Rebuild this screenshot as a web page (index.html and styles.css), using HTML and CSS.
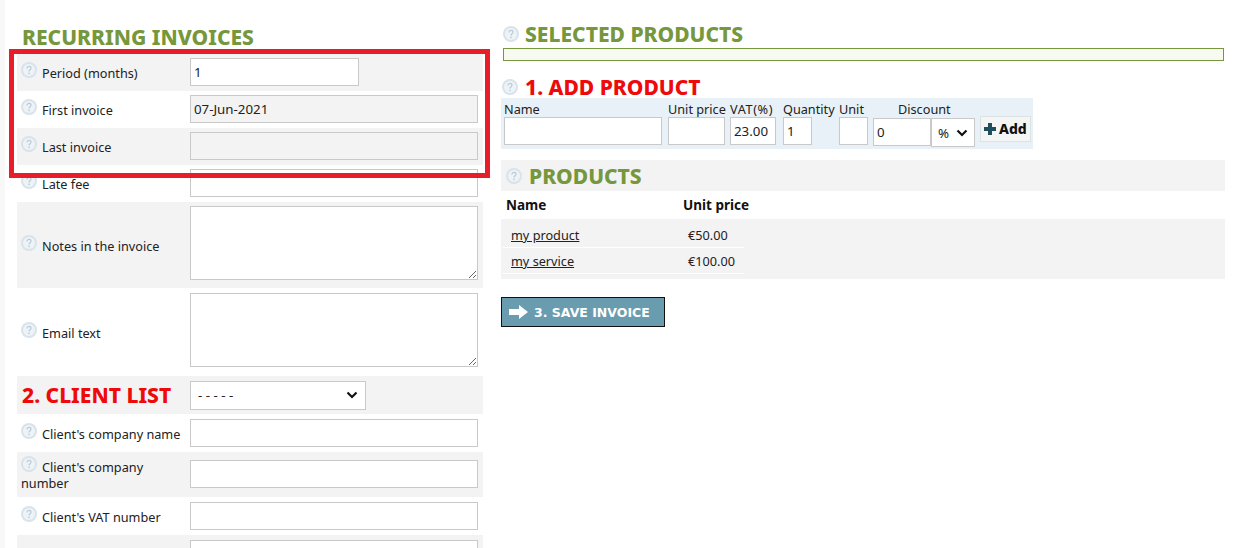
FILE: index.html
```html
<!DOCTYPE html>
<html>
<head>
  <meta charset="utf-8">
  <meta name="viewport" content="width=device-width">
  <title>Recurring invoices</title>
  <link rel="stylesheet" href="styles.css">
</head>
<body>
  <svg width="0" height="0" class="defs">
    <symbol id="help" viewBox="0 0 16 16">
      <circle cx="8" cy="8" r="8" fill="#d8e3ec"/>
      <circle cx="8" cy="8" r="6" fill="#eef3f7"/>
      <path d="M6 6.4C6 5 7 4.4 8 4.4s2 .7 2 1.8c0 1.5-2 1.6-2 3.2" fill="none" stroke="#bccad5" stroke-width="1.2"/>
      <circle cx="8" cy="11.4" r=".8" fill="#bccad5"/>
    </symbol>
  </svg>

  <div class="page">
    <div class="left">
      <h2 class="title green">RECURRING INVOICES</h2>

      <div class="row gray h37">
        <label><svg class="help"><use href="#help"/></svg>Period (months)</label>
        <input class="short" value="1">
      </div>
      <div class="row h37">
        <label><svg class="help"><use href="#help"/></svg>First invoice</label>
        <input class="off" value="07-Jun-2021" readonly>
      </div>
      <div class="row gray h37">
        <label><svg class="help"><use href="#help"/></svg>Last invoice</label>
        <input class="off" readonly>
      </div>
      <div class="row h37">
        <label><svg class="help"><use href="#help"/></svg>Late fee</label>
        <input>
      </div>
      <div class="row gray h86">
        <label><svg class="help"><use href="#help"/></svg>Notes in the invoice</label>
        <textarea></textarea>
      </div>
      <div class="row h88">
        <label><svg class="help"><use href="#help"/></svg>Email text</label>
        <textarea></textarea>
      </div>
      <div class="row gray h38">
        <h2 class="title red">2. CLIENT LIST</h2>
        <select class="clients"><option>- - - - -</option></select>
      </div>
      <div class="row h38">
        <label><svg class="help"><use href="#help"/></svg>Client's company name</label>
        <input>
      </div>
      <div class="row gray h45">
        <label class="two"><svg class="help"><use href="#help"/></svg>Client's company number</label>
        <input>
      </div>
      <div class="row h38">
        <label><svg class="help"><use href="#help"/></svg>Client's VAT number</label>
        <input>
      </div>
      <div class="row gray h38">
        <label></label>
        <input>
      </div>
    </div>

    <div class="right">
      <div class="head">
        <svg class="help"><use href="#help"/></svg>
        <h2 class="title green">SELECTED PRODUCTS</h2>
      </div>
      <div class="selected"></div>

      <div class="head add-head">
        <svg class="help"><use href="#help"/></svg>
        <h2 class="title red">1. ADD PRODUCT</h2>
      </div>
      <div class="add">
        <div class="col w-name"><span>Name</span><input></div>
        <div class="col w-price"><span>Unit price</span><input></div>
        <div class="col w-vat"><span>VAT(%)</span><input value="23.00"></div>
        <div class="col w-qty"><span>Quantity</span><input value="1"></div>
        <div class="col w-unit"><span>Unit</span><input></div>
        <div class="col w-disc">
          <span class="disc-label">Discount</span>
          <div class="disc">
            <input value="0">
            <select><option>%</option></select>
          </div>
        </div>
        <button class="add-btn">
          <svg width="14" height="14" viewBox="0 0 14 14"><path d="M5 1h4v4h4v4H9v4H5V9H1V5h4z" fill="#1f4f5c"/></svg>Add
        </button>
      </div>

      <div class="head products">
        <svg class="help"><use href="#help"/></svg>
        <h2 class="title green">PRODUCTS</h2>
      </div>
      <div class="th"><b class="c1">Name</b><b>Unit price</b></div>
      <div class="list">
        <div class="item"><a class="c1" href="#">my product</a><span>€50.00</span></div>
        <div class="item"><a class="c1" href="#">my service</a><span>€100.00</span></div>
      </div>

      <button class="save">
        <svg width="20" height="14" viewBox="0 0 20 14"><path d="M0 4h10V0l9 7-9 7v-4H0z" fill="#fff"/></svg>3. SAVE INVOICE
      </button>
    </div>
  </div>

  <div class="marker"></div>
</body>
</html>
```

FILE: styles.css
```css
html, body {margin:0; padding:0; height:548px; overflow:hidden;}
body {background:#fff; color:#222; font-family:"Noto Sans", sans-serif; font-size:12.7px;}
.defs {position:absolute;}

.page {display:flex; border-left:5px solid #f8f8f8; padding-left:12px;}
.left {width:466px; margin-right:18px;}
.right {width:724px; padding-top:22px;}

.title {margin:0; font-size:21px; line-height:24px; font-weight:800;}
.green {color:#76973c;}
.red {color:#ee0a0a;}
.left > .title {padding:25px 0 5px 5px;}

.help {width:16px; height:16px; flex:none;}

.row {display:grid; grid-template-columns:173px 288px; align-items:center; box-sizing:border-box; width:466px;}
.gray {background:#f3f3f3;}
.h37 {height:37px; padding-bottom:1px;}
.h38 {height:38px;}
.h45 {height:45px; padding-bottom:2px;}
.h86 {height:86px;}
.h88 {height:88px;}
.row label {padding-left:4px; line-height:16px; position:relative; top:-1px;}
.row label .help {vertical-align:0; margin-right:5px;}
.row .two {top:0;}
.row .title {padding-left:5px;}

input, textarea, select {box-sizing:border-box; border:1px solid #c9c9c9; background:#fff; color:#222; font-family:"Noto Sans", sans-serif; font-size:13.3px; margin:0; border-radius:0;}
input {height:28px; width:100%; padding:0 3px 1px;}
.row input {width:288px;}
.row input.short {width:169px;}
.row input.off {background:#f3f3f3;}
textarea {height:74px; width:288px; display:block; position:relative; top:-2px;}
select {appearance:none; background:#fff url("data:image/svg+xml,%3Csvg xmlns='http://www.w3.org/2000/svg' width='12' height='8'%3E%3Cpath d='M1.5 1.5 6 6l4.5-4.5' fill='none' stroke='%23111' stroke-width='2.2'/%3E%3C/svg%3E") no-repeat right 7px center;}
.row select.clients {width:176px; height:29px; padding-left:7px;}

.head {display:flex; align-items:center; gap:6px; padding-left:2px;}
.selected {height:13px; box-sizing:border-box; margin:2px 1px 0 2px; border:1px solid #76973c; background:#f6faf0;}
.add-head {margin-top:14px; padding-left:1px; gap:7px;}

.add {display:flex; width:532px; height:51px; background:#e7f1f7; box-sizing:border-box; padding:3px 0 0 3px; margin-top:-1px;}
.col {display:flex; flex-direction:column; line-height:16px;}
.w-name {width:158px; margin-right:6px;}
.w-price {width:57px; margin-right:5px;}
.w-vat {width:46px; margin-right:7px;}
.w-qty {width:29px; margin-right:27px;}
.w-unit {width:29px; margin-right:5px;}
.w-disc {width:102px; margin-right:5px;}
.col span {white-space:nowrap;}
.w-vat span {letter-spacing:.6px;}
.disc-label {padding-left:25px;}
.disc {display:flex; margin-top:1px;}
.disc input {width:58px; flex:none;}
.disc select {width:44px; height:29px; flex:none; padding-left:6px; background-position:right 6px center;}
.add-btn {display:flex; align-items:center; gap:2px; width:51px; height:26px; margin-top:15px; padding:0 0 1px 2px; border:1px solid #dde3e3; background:#f3f6f4; color:#111; font-family:"Noto Sans", sans-serif; font-size:14px; font-weight:800;}

.products {margin-top:11px; height:31px; background:#f3f3f3; padding-left:5px; gap:7px;}
.th {display:flex; height:28px; align-items:center; padding-left:5px; font-size:13.5px; color:#111;}
.th .c1 {width:177px;}
.list {background:#f3f3f3; height:60px; padding:4px 0 0 2px; box-sizing:border-box;}
.item {display:flex; align-items:center; width:241px; height:25px; border-bottom:1px solid #fff; padding-left:8px; box-sizing:border-box; margin-bottom:1px;}
.item .c1 {width:177px; color:#222;}
.save {display:flex; align-items:center; gap:5px; margin-top:18px; width:164px; height:30px; padding:0 0 0 7px; border:1px solid #111; background:#6a9cb0; color:#fff; font-family:"DejaVu Sans", sans-serif; font-size:12.5px; font-weight:700;}

.marker {position:absolute; left:9px; top:49px; width:481px; height:129px; box-sizing:border-box; border:5px solid #e71d2a;}
```
